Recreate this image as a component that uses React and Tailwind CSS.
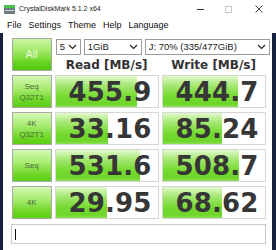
import React from 'react';

const rows = [
  { top: '4K', bottom: 'Q32T1', read: '455.9', write: '444.7', rf: 81, wf: 75 },
  { top: '4K', bottom: 'Q32T1', read: '33.16', write: '85.24', rf: 52, wf: 59 },
  { top: 'Seq', bottom: null, read: '531.6', write: '508.7', rf: 84, wf: 76 },
  { top: '4K', bottom: null, read: '29.95', write: '68.62', rf: 51, wf: 59 },
];
rows[0].top = 'Seq';

const Chevron = () => (
  <svg width="9" height="6" viewBox="0 0 9 6" className="shrink-0">
    <path d="M1 1 L4.5 4.5 L8 1" fill="none" stroke="#222" strokeWidth="1.2" />
  </svg>
);

const Select = ({ w, children }) => (
  <div className={`${w} h-[16px] border border-[#9c9c9c] bg-white flex items-center justify-between pl-[3px] pr-[3px] text-[9.5px] text-[#222]`}>
    <span className="leading-none">{children}</span>
    <Chevron />
  </div>
);

const LabelBtn = ({ top, bottom }) => (
  <div className="h-full border border-[#a9a9a9] bg-[linear-gradient(180deg,#d4f8b4_0%,#a9ec72_40%,#6cd624_80%,#5ccd14_100%)] flex flex-col items-center justify-center text-[8px] leading-[11px] text-[#4a6a36]">
    <span>{top}</span>
    {bottom && <span>{bottom}</span>}
  </div>
);

const Value = ({ text, fill }) => (
  <div
    className="h-full border border-[#d6d6d6] bg-white bg-[linear-gradient(180deg,#e2f9cc_0%,#a6e874_30%,#76da31_65%,#6fd52a_90%,#8adf54_100%)] bg-no-repeat flex items-center justify-end pr-[6px]"
    style={{ backgroundSize: `${fill}px 100%` }}
  >
    <span className="font-['DejaVu_Sans'] font-bold text-[26px] leading-none text-[#363636] tracking-[0.2px]">{text}</span>
  </div>
);

export default function App() {
  return (
    <div className="w-[276px] h-[250px] bg-white flex flex-col overflow-hidden font-['Liberation_Sans',Arial,sans-serif]">
      {/* title bar */}
      <div className="h-[18px] flex items-center pl-[4px] shrink-0">
        <svg width="11" height="9" viewBox="0 0 11 9" className="shrink-0">
          <rect x="0" y="0" width="11" height="9" fill="#6f7b83" />
          <rect x="0" y="0" width="11" height="3" fill="#49c24a" />
          <rect x="1" y="5" width="9" height="1" fill="#c9d2d6" />
        </svg>
        <span className="ml-[4px] text-[7px] text-[#1a1a1a]">CrystalDiskMark 5.1.2 x64</span>
        <div className="flex-1" />
        <div className="flex items-center text-[#555]">
          <div className="w-[28px] flex justify-center"><div className="w-[7px] h-px bg-[#333]" /></div>
          <div className="w-[28px] flex justify-center"><div className="w-[7px] h-[7px] border border-[#c8c8c8]" /></div>
          <div className="w-[34px] flex justify-center">
            <svg width="8" height="8" viewBox="0 0 8 8"><path d="M0.5 0.5 L7.5 7.5 M7.5 0.5 L0.5 7.5" stroke="#333" strokeWidth="0.9" /></svg>
          </div>
        </div>
      </div>
      {/* menu bar */}
      <div className="h-[15px] flex items-center gap-[7px] pl-[7px] text-[9px] text-[#111] shrink-0">
        <span>File</span>
        <span>Settings</span>
        <span>Theme</span>
        <span>Help</span>
        <span>Language</span>
      </div>
      {/* client */}
      <div className="flex-1 flex">
        <div className="w-[3px] bg-[#14213f]" />
        <div className="flex-1 pl-[9px] pr-[2px] pt-[5px] flex flex-col">
          <div className="flex gap-[3px] h-[33px]">
            <div className="w-[40px] h-full border border-[#a9a9a9] bg-[linear-gradient(180deg,#cdf6a8_0%,#9fe964_40%,#62d11a_80%,#53c90d_100%)] flex items-center justify-center">
              <span className="text-[11px] text-[#eaf7e0]">All</span>
            </div>
            <div className="flex-1 flex flex-col">
              <div className="flex gap-[3px] pl-[1px] pt-[1px]">
                <Select w="w-[25px]">5</Select>
                <Select w="w-[58px]">1GiB</Select>
                <Select w="w-[125px]">J: 70% (335/477GiB)</Select>
              </div>
              <div className="grid grid-cols-[104px_104px] gap-x-[3px] flex-1 items-center pt-[3px]">
                <span className="text-center font-['DejaVu_Sans'] font-bold text-[12px] leading-none text-[#333]">Read [MB/s]</span>
                <span className="text-center font-['DejaVu_Sans'] font-bold text-[12px] leading-none text-[#333]">Write [MB/s]</span>
              </div>
            </div>
          </div>
          <div className="mt-[4px] grid grid-cols-[40px_104px_104px] auto-rows-[33px] gap-x-[3px] gap-y-[4px]">
            {rows.map((r, i) => (
              <React.Fragment key={i}>
                <LabelBtn top={r.top} bottom={r.bottom} />
                <Value text={r.read} fill={r.rf} />
                <Value text={r.write} fill={r.wf} />
              </React.Fragment>
            ))}
          </div>
          <div className="mt-[5px] ml-[-1px] w-[255px] h-[20px] border border-[#c9c9c9] bg-white flex items-center pl-[3px]">
            <div className="w-px h-[11px] bg-[#111]" />
          </div>
        </div>
        <div className="w-[5px] bg-[#14213f]" />
      </div>
    </div>
  );
}
